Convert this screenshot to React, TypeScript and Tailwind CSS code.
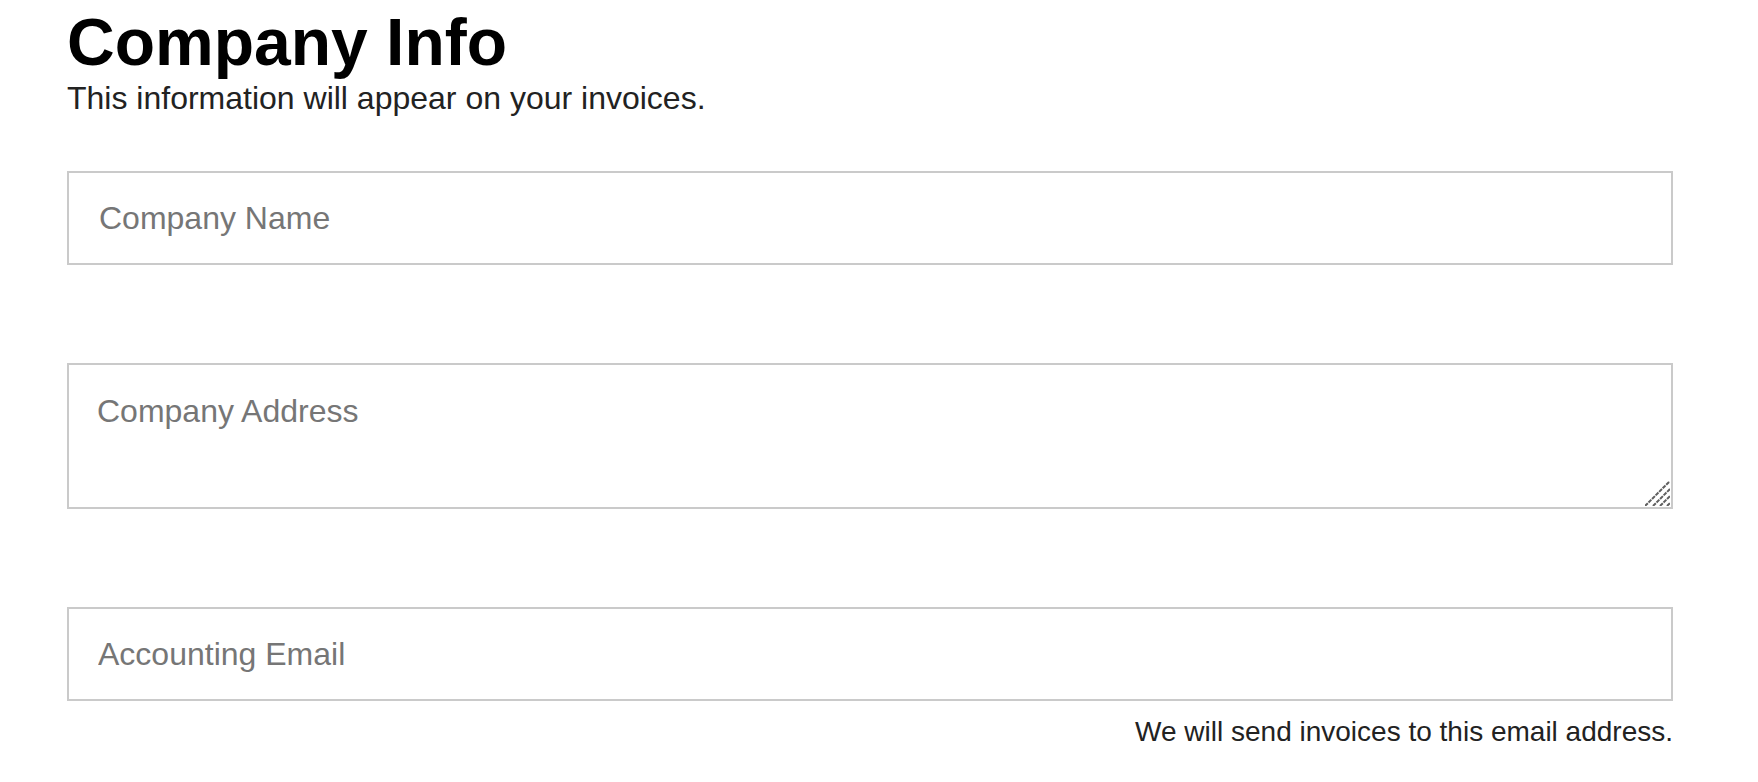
export default function App() {
  return (
    <div className="min-h-screen bg-white font-['Liberation_Sans',Arial,sans-serif]">
      <div className="ml-[67px] w-[1606px] pt-[9px]">
        <h1 className="text-[66px] leading-[66px] font-bold text-black">Company Info</h1>
        <p className="mt-[3px] text-[32px] leading-[40px] text-[#222]">
          This information will appear on your invoices.
        </p>

        <form className="mt-[53px]">
          <input
            type="text"
            placeholder="Company Name"
            className="block w-full h-[94px] border-2 border-[#cacaca] bg-white px-[30px] text-[32px] leading-[48px] text-[#222] placeholder:text-[#767676] outline-none"
          />

          <div className="relative mt-[98px]">
            <textarea
              placeholder="Company Address"
              className="block w-full h-[146px] resize-none border-2 border-[#cacaca] bg-white px-[28px] pt-[22px] text-[32px] leading-[48px] text-[#222] placeholder:text-[#767676] outline-none"
            />
            {/* resize grip */}
            <svg
              className="pointer-events-none absolute right-[3px] bottom-[3px]"
              width="25"
              height="25"
              viewBox="0 0 25 25"
              fill="none"
              stroke="#5f5f5f"
              strokeWidth="2"
              strokeDasharray="4 1"
            >
              <line x1="0" y1="25" x2="25" y2="0" />
              <line x1="8" y1="25" x2="25" y2="8" />
              <line x1="15" y1="25" x2="25" y2="15" />
              <line x1="22" y1="25" x2="25" y2="22" />
            </svg>
          </div>

          <input
            type="email"
            placeholder="Accounting Email"
            className="mt-[98px] block w-full h-[94px] border-2 border-[#cacaca] bg-white px-[29px] text-[32px] leading-[48px] text-[#222] placeholder:text-[#767676] outline-none"
          />
          <p className="mt-[10px] text-right text-[28px] leading-[42px] text-[#222]">
            We will send invoices to this email address.
          </p>
        </form>
      </div>
    </div>
  );
}
